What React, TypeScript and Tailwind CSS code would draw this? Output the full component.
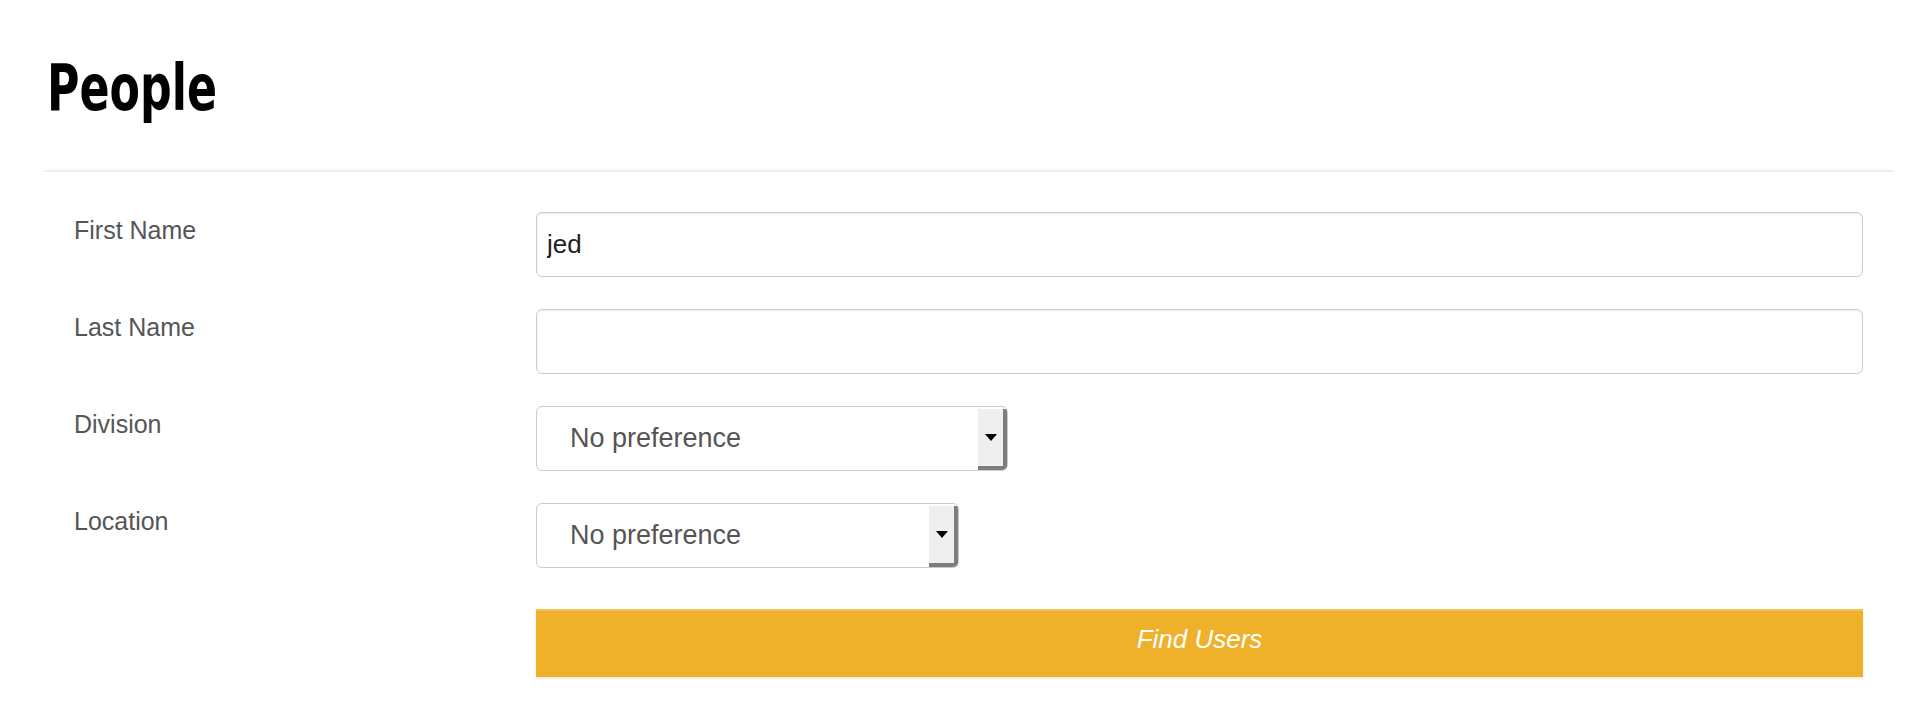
import { useState } from "react";

interface SelectProps {
  value: string;
  width: string;
}

function FakeSelect({ value, width }: SelectProps) {
  return (
    <div className={`${width} h-[65px] flex bg-white border border-[#cccccc] rounded-[6px] overflow-hidden`}>
      <span className="flex-1 self-center pl-[33px] text-[27px] text-[#555555] leading-none">{value}</span>
      <div className="mt-[2px] w-[29px] shrink-0 bg-[#efefef] border-r-[4px] border-b-[4px] border-[#7d7d7d] rounded-br-[4px] flex items-center justify-center">
        <div className="w-0 h-0 border-l-[6px] border-r-[6px] border-t-[7px] border-l-transparent border-r-transparent border-t-black" />
      </div>
    </div>
  );
}

export default function App() {
  const [first, setFirst] = useState("jed");
  const [last, setLast] = useState("");

  const label = "w-[462px] shrink-0 text-[25px] leading-[36px] text-[#555555]";
  const input =
    "w-full h-[65px] bg-white border border-[#cccccc] rounded-[6px] px-[10px] text-[26px] text-[#222222] shadow-[inset_0_1px_2px_rgba(0,0,0,0.08)] focus:outline-none";

  return (
    <div className="min-h-[712px] bg-white pl-[44px] pr-[27px] pt-[56px] font-['Liberation_Sans',Arial,sans-serif]">
      {/* Header */}
      <h1 className="pl-[3px] h-[64px] text-[64px] leading-[64px] font-bold text-black font-['DejaVu_Sans_Condensed','DejaVu_Sans',sans-serif]">
        <span className="inline-block origin-left scale-x-[0.77]">People</span>
      </h1>
      <div className="mt-[50px] border-t-2 border-[#eeeeee]" />

      <form className="mt-[40px] px-[30px] flex flex-col gap-[32px]" onSubmit={(e) => e.preventDefault()}>
        <div className="flex">
          <label className={label}>First Name</label>
          <input value={first} onChange={(e) => setFirst(e.target.value)} className={input} />
        </div>
        <div className="flex">
          <label className={label}>Last Name</label>
          <input value={last} onChange={(e) => setLast(e.target.value)} className={input} />
        </div>
        <div className="flex">
          <label className={label}>Division</label>
          <FakeSelect value="No preference" width="w-[472px]" />
        </div>
        <div className="flex">
          <label className={label}>Location</label>
          <FakeSelect value="No preference" width="w-[423px]" />
        </div>
        <div className="flex mt-[9px]">
          <div className="w-[462px] shrink-0" />
          <button
            type="submit"
            className="flex-1 h-[68px] bg-[#efb02a] border-t-2 border-[#f3c35b] shadow-[0_2px_2px_rgba(0,0,0,0.08)] text-white italic text-[26px] flex items-center justify-center pb-[9px]"
          >
            Find Users
          </button>
        </div>
      </form>
    </div>
  );
}
